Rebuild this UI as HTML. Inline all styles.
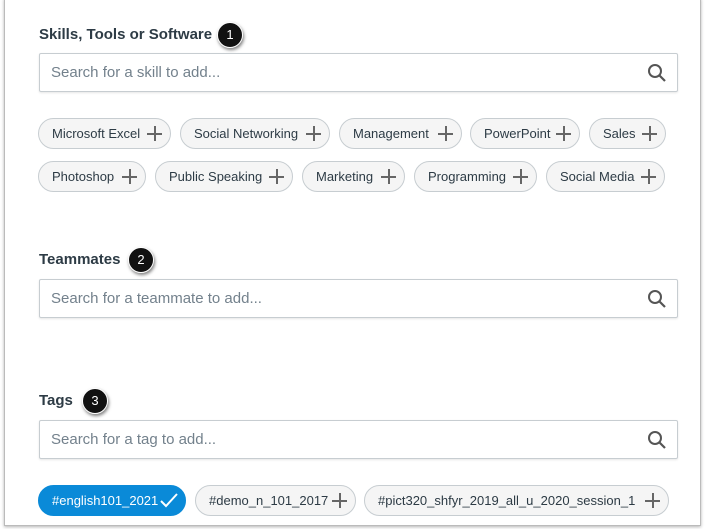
<!DOCTYPE html>
<html><head><style>
body{margin:0;width:705px;height:529px;background:#fff;font-family:"Liberation Sans",sans-serif;position:relative;overflow:hidden}
.frame{position:absolute;left:4px;top:-2px;width:695px;height:526px;border:1px solid #bbb;box-shadow:0 1px 3px rgba(0,0,0,.3)}
.h{position:absolute;left:39px;font-size:15px;font-weight:bold;color:#2d3b45}
.badge{position:absolute;width:24px;height:24px;border-radius:50%;background:#111;color:#fff;font-size:13px;text-align:center;line-height:24px;box-shadow:1px 2px 3px rgba(0,0,0,.5);border:1px solid #fff}
.s{position:absolute;left:39px;width:637px;height:37px;border:1px solid #c7cdd1;border-radius:2px;box-shadow:0 1px 2px rgba(0,0,0,.1)}
.s span{position:absolute;left:11px;top:10px;font-size:15px;color:#73818c}
.s svg{position:absolute;right:10px;top:9px}
.c{position:absolute;height:29px;border:1px solid #c7cdd1;border-radius:16px;background:#f5f5f5;font-size:13px;color:#2d3b45;line-height:29px;padding-left:13px;box-sizing:content-box}
.c b{position:absolute;right:8px;top:7px;width:15px;height:15px}
.c b:before{content:"";position:absolute;left:0;top:7px;width:15px;height:2px;background:#666}
.c b:after{content:"";position:absolute;left:7px;top:0;width:2px;height:15px;background:#666}
</style></head><body>
<div class="frame"></div>
<div class="h" style="top:26px">Skills, Tools or Software</div>
<div class="badge" style="left:217px;top:22px">1</div>
<div class="s" style="top:53px"><span>Search for a skill to add...</span><svg width="20" height="20" viewBox="0 0 20 20"><circle cx="8" cy="8" r="6" fill="none" stroke="#555" stroke-width="2"/><line x1="12.5" y1="12.5" x2="18" y2="18" stroke="#555" stroke-width="2.2"/></svg></div>
<div class="c" style="left:38px;top:118px;width:118px">Microsoft Excel<b></b></div>
<div class="c" style="left:180px;top:118px;width:135px">Social Networking<b></b></div>
<div class="c" style="left:339px;top:118px;width:108px">Management<b></b></div>
<div class="c" style="left:470px;top:118px;width:95px">PowerPoint<b></b></div>
<div class="c" style="left:589px;top:118px;width:62px">Sales<b></b></div>
<div class="c" style="left:38px;top:161px;width:93px">Photoshop<b></b></div>
<div class="c" style="left:155px;top:161px;width:123px">Public Speaking<b></b></div>
<div class="c" style="left:302px;top:161px;width:88px">Marketing<b></b></div>
<div class="c" style="left:414px;top:161px;width:108px">Programming<b></b></div>
<div class="c" style="left:546px;top:161px;width:104px">Social Media<b></b></div>
<div class="h" style="top:251px">Teammates</div>
<div class="badge" style="left:128px;top:247px">2</div>
<div class="s" style="top:279px"><span>Search for a teammate to add...</span><svg width="20" height="20" viewBox="0 0 20 20"><circle cx="8" cy="8" r="6" fill="none" stroke="#555" stroke-width="2"/><line x1="12.5" y1="12.5" x2="18" y2="18" stroke="#555" stroke-width="2.2"/></svg></div>
<div class="h" style="top:392px">Tags</div>
<div class="badge" style="left:82px;top:388px">3</div>
<div class="s" style="top:420px"><span>Search for a tag to add...</span><svg width="20" height="20" viewBox="0 0 20 20"><circle cx="8" cy="8" r="6" fill="none" stroke="#555" stroke-width="2"/><line x1="12.5" y1="12.5" x2="18" y2="18" stroke="#555" stroke-width="2.2"/></svg></div>
<div class="c" style="left:38px;top:485px;width:133px;background:#0a8ad8;border-color:#0a8ad8;color:#fff;padding-left:13px">#english101_2021<svg style="position:absolute;right:7px;top:7px" width="18" height="15" viewBox="0 0 18 15"><path d="M1 8 L6 13 L17 1" fill="none" stroke="#fff" stroke-width="2"/></svg></div>
<div class="c" style="left:195px;top:485px;width:146px">#demo_n_101_2017<b></b></div>
<div class="c" style="left:364px;top:485px;width:290px">#pict320_shfyr_2019_all_u_2020_session_1<b></b></div>
</body></html>
